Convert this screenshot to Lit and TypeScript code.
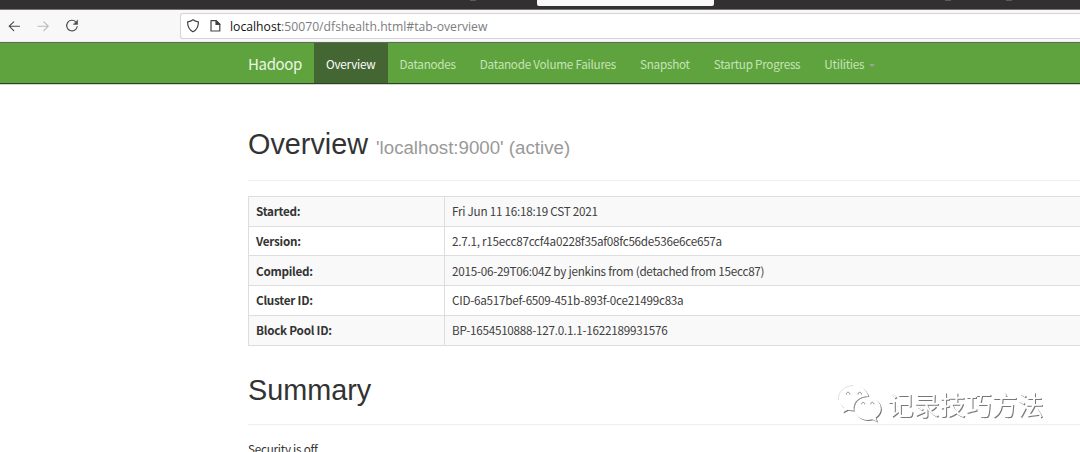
import { LitElement, html, css } from "lit";
import { customElement } from "lit/decorators.js";

const NAV = ["Datanodes", "Datanode Volume Failures", "Snapshot", "Startup Progress"];

const ROWS: [string, string][] = [
  ["Started:", "Fri Jun 11 16:18:19 CST 2021"],
  ["Version:", "2.7.1, r15ecc87ccf4a0228f35af08fc56de536e6ce657a"],
  ["Compiled:", "2015-06-29T06:04Z by jenkins from (detached from 15ecc87)"],
  ["Cluster ID:", "CID-6a517bef-6509-451b-893f-0ce21499c83a"],
  ["Block Pool ID:", "BP-1654510888-127.0.1.1-1622189931576"],
];

@customElement("browser-chrome")
class BrowserChrome extends LitElement {
  static styles = css`
    :host { display: block; letter-spacing: 0; }
    .tabs { height: 9px; background: #323031; border-bottom: 1px solid #777476; overflow: hidden; }
    .tabshapes { display: block; width: 1080px; height: 9px; }
    .bar { height: 32px; box-sizing: border-box; background: #f8f8f8; display: flex; padding-top: 3px; border-bottom: 1px solid #eee; }
    .buttons { width: 180px; height: 26px; flex: none; }
    .field { flex: 1; height: 26px; box-sizing: border-box; border: 1px solid #d4d4d4; border-right: 0; border-radius: 3px 0 0 3px; background: #fff; display: flex; align-items: center; }
    .icons { width: 49px; height: 24px; flex: none; }
    .url { font: 12.2px/24px "Open Sans", "Noto Sans", sans-serif; padding-top: 1px; color: #7d7d7d; white-space: nowrap; }
    .host { color: #111; }
  `;
  render() {
    return html`
      <div class="tabs">
        <svg class="tabshapes" viewBox="0 0 1080 9">
          <path d="M537 0h177v4a2 2 0 0 1-2 2H539a2 2 0 0 1-2-2z" fill="#f9f9fa" />
          <path d="M470 0h6v1h-6zM945 0h6v1h-6zM1006 0h6v1h-6z" fill="#5c5a5b" />
        </svg>
      </div>
      <div class="bar">
        <svg class="buttons" viewBox="0 13 180 26" fill="none" stroke="#4a4a4a" stroke-width="1.15" stroke-linecap="round" stroke-linejoin="round">
          <path d="M19.500 26.200H9.200M13.700 21.800 9.200 26.200l4.500 4.400" />
          <path d="M38 26.200h10.300M43.800 21.800l4.500 4.400-4.500 4.400" stroke="#b9b9b9" />
          <path d="M75.800 21.900a5.300 5.300 0 1 0 1.400 4.600" />
          <path d="M77.600 20.300v4.100h-4.100z" fill="#4a4a4a" stroke-width=".5" />
        </svg>
        <div class="field">
          <svg class="icons" viewBox="181 14 49 24" fill="none" stroke="#444" stroke-width="1.2" stroke-linejoin="round">
            <path d="M193 19.800c1.600 1.300 3.300 1.800 5.400 2 .1 4.500-1.500 8-5.400 10-3.900-2-5.500-5.500-5.400-10 2.100-.2 3.800-.7 5.400-2z" />
            <path d="M211 20.600h5.300l3.500 3.500v6.900h-8.800z" />
            <path d="M216 20.600v3.800h3.800z" fill="#333" />
          </svg>
          <div class="url"><span class="host">localhost</span>:50070/dfshealth.html#tab-overview</div>
        </div>
      </div>
    `;
  }
}

@customElement("app-root")
class AppRoot extends LitElement {
  static styles = css`
    :host { display: block; position: relative; width: 1080px; height: 452px; overflow: hidden; background: #fff; color: #333; font: 11.7px/16px "Noto Sans CJK SC", sans-serif; letter-spacing: -.25px; }
    .navbar { height: 42px; margin-bottom: 1px; box-sizing: border-box; background: #5fa33e; border-top: 1px solid #636761; border-bottom: 1px solid #27451b; box-shadow: 0 1px 0 #d4d4d4; padding-left: 248px; display: flex; line-height: 41px; white-space: nowrap; color: #c6e4b8; }
    .brand { width: 66px; font-size: 15px; letter-spacing: -.35px; color: #eaf6e4; }
    .active { width: 73.500px; background: #446633; color: #fff; text-align: center; margin-right: 12px; }
    .item { margin-right: 24px; }
    .caret { display: inline-block; margin-left: 5px; vertical-align: 2px; border: 3px solid transparent; border-top-color: #9aa596; border-bottom: 0; }
    .content { margin-left: 248px; padding-top: 39px; }
    h1 { margin: 0; font: 28.800px/40px "Liberation Sans", sans-serif; letter-spacing: 0; white-space: nowrap; }
    h1 small { font-size: 18.700px; color: #999; }
    .rule { height: 1px; background: #eee; }
    .first { margin: 12px 0 15px; }
    .second { margin: 14px 0 16px; }
    .table { width: 860px; height: 149.500px; box-sizing: border-box; border: 1px solid #ddd; border-top: 0; display: grid; grid-template-rows: repeat(5, 1fr); margin-bottom: 24.500px; }
    .row { display: grid; grid-template-columns: 196px 1fr; border-top: 1px solid #ddd; white-space: nowrap; }
    .row:nth-child(odd) { background: #f9f9f9; }
    .cell { padding-left: 7px; display: flex; align-items: center; color: #404040; }
    .key { font-weight: 700; border-right: 1px solid #ddd; color: #333; }
    .mark { position: absolute; left: 834px; top: 380px; width: 220px; height: 46px; filter: drop-shadow(1px 1px 0 #777); }
    .marktext { font: 26px "Noto Sans CJK SC", sans-serif; letter-spacing: 0; }
  `;
  render() {
    return html`
      <browser-chrome></browser-chrome>
      <nav class="navbar">
        <div class="brand">Hadoop</div>
        <div class="active">Overview</div>
        ${NAV.map((n) => html`<div class="item">${n}</div>`)}
        <div class="item">Utilities<span class="caret"></span></div>
      </nav>
      <main class="content">
        <h1>Overview <small>'localhost:9000' (active)</small></h1>
        <div class="rule first"></div>
        <div class="table">
          ${ROWS.map(([k, v]) => html`<div class="row"><div class="cell key">${k}</div><div class="cell">${v}</div></div>`)}
        </div>
        <h1>Summary</h1>
        <div class="rule second"></div>
        <div>Security is off.</div>
      </main>
      <svg class="mark" viewBox="834 380 220 46" fill="#fff">
        <path d="M853.500 385c-8.500 0-15.300 5.700-15.300 12.800 0 4 2.200 7.600 5.700 10l-1.400 4.600 5.200-2.700c2 .5 3.900.8 6.200.7-1.500-8 5-14.200 14.600-14-1.500-6.500-7.500-11.400-15-11.400z" />
        <path d="M867.500 397c-7.300 0-13 5-13 11.500s5.700 11.500 13 11.500c1.700 0 3.300-.3 4.700-.8l4.800 2.400-1.300-4.100c3.300-2.200 5.200-5.300 5.200-9 0-6.500-6-11.500-13.400-11.500z" />
        <path d="M838.500 400c-1-8 6-14.500 15-14.500" fill="none" stroke="#ccc" stroke-width=".6" />
        <path d="M854.300 408.500c0-6.500 5.700-11.700 13-11.700" fill="none" stroke="#999" stroke-width=".9" />
        <path d="M846.300 394.500c0-3 3.500-3 3.500 0M858 394.500c0-3 3.500-3 3.500 0M861.700 404.300c0-2.600 3-2.600 3 0M870.800 404.300c0-2.600 3-2.600 3 0" fill="none" stroke="#888" />
        <text class="marktext" x="887.500" y="414.500">记录技巧方法</text>
      </svg>
    `;
  }
}
